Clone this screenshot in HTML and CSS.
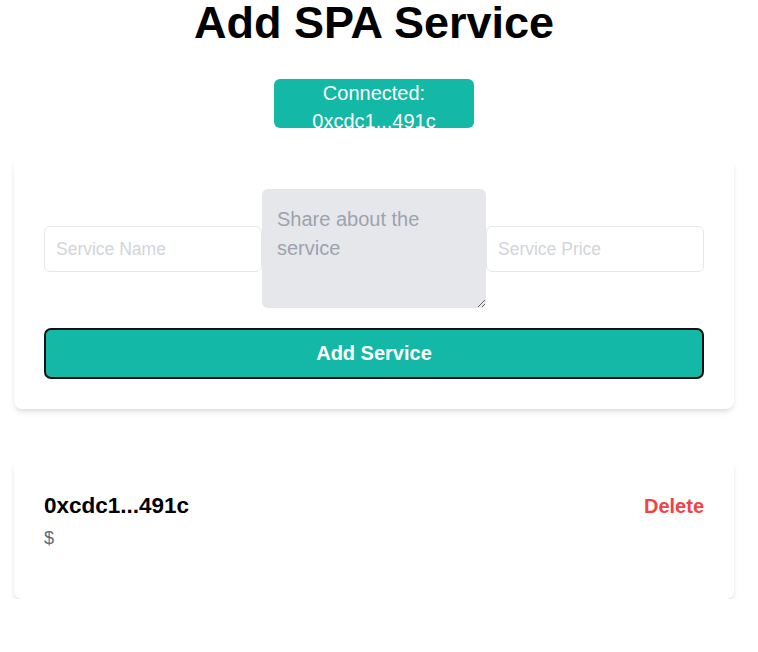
FILE: index.html
```html
<!DOCTYPE html>
<html lang="en">
<head>
<meta charset="utf-8">
<title>Add SPA Service</title>
<link rel="stylesheet" href="styles.css">
</head>
<body>
<main class="page">
  <h1 class="title">Add SPA Service</h1>
  <div class="badge-wrap">
    <div class="badge">Connected: 0xcdc1...491c</div>
  </div>
  <form class="card form-card">
    <div class="fields">
      <input class="field" type="text" placeholder="Service Name">
      <textarea class="desc" placeholder="Share about the service"></textarea>
      <input class="field" type="text" placeholder="Service Price">
    </div>
    <button class="submit" type="button">Add Service</button>
  </form>
  <section class="card item-card">
    <div class="item-head">
      <h2 class="item-title">0xcdc1...491c</h2>
      <button class="delete" type="button">Delete</button>
    </div>
    <p class="price">$</p>
  </section>
</main>
</body>
</html>
```

FILE: styles.css
```css
* { box-sizing: border-box; }

html, body {
  margin: 0;
  padding: 0;
  background: #ffffff;
}

body {
  font-family: "Liberation Sans", Arial, sans-serif;
  color: #000;
}

.page {
  width: 748px;
  padding: 0 14px;
}

.title {
  margin: 0;
  font-size: 45px;
  line-height: 45px;
  font-weight: 700;
  text-align: center;
  color: #000;
}

.badge-wrap {
  display: flex;
  justify-content: center;
  margin-top: 34px;
}

.badge {
  width: 200px;
  height: 49px;
  overflow: hidden;
  background: #14b8a6;
  color: #fff;
  border-radius: 6px;
  font-size: 20px;
  line-height: 28px;
  text-align: center;
}

.card {
  background: #fff;
  border-radius: 8px;
  box-shadow: 0 4px 6px -1px rgba(0,0,0,0.1), 0 2px 4px -2px rgba(0,0,0,0.1);
}

.form-card {
  margin: 31px 0 0;
  padding: 30px;
  display: flex;
  flex-direction: column;
  gap: 20px;
}

.fields {
  display: flex;
  align-items: center;
}

.field {
  flex: 1;
  min-width: 0;
  height: 46px;
  border: 1px solid #e5e7eb;
  border-radius: 6px;
  padding: 1px 11px 0;
  font-family: "Liberation Sans", Arial, sans-serif;
  font-size: 17.5px;
  color: #111;
  background: #fff;
  outline: none;
}

.field::placeholder { color: #d1d5db; }

.desc {
  width: 224px;
  height: 119px;
  flex: none;
  border: none;
  border-radius: 6px;
  background: #e5e7eb;
  padding: 16px 15px;
  font-family: "Liberation Sans", Arial, sans-serif;
  font-size: 20px;
  line-height: 29px;
  color: #111;
  outline: none;
}

.desc::placeholder { color: #9ca3af; }

.submit {
  height: 51px;
  width: 100%;
  background: #14b8a6;
  border: 2px solid #111;
  border-radius: 7px;
  color: #fff;
  font-family: "Liberation Sans", Arial, sans-serif;
  font-size: 20px;
  font-weight: 700;
  cursor: pointer;
}

.item-card {
  margin-top: 50px;
  padding: 31px 30px 47px;
}

.item-head {
  display: flex;
  justify-content: space-between;
  align-items: baseline;
}

.item-title {
  margin: 0;
  font-size: 22.5px;
  line-height: 32px;
  font-weight: 700;
  color: #000;
}

.delete {
  background: none;
  border: none;
  padding: 0;
  font-family: "Liberation Sans", Arial, sans-serif;
  font-size: 20px;
  font-weight: 700;
  color: #ef4444;
  cursor: pointer;
}

.price {
  margin: 2px 0 0;
  font-size: 18px;
  line-height: 28px;
  color: #5b6b82;
}
```
